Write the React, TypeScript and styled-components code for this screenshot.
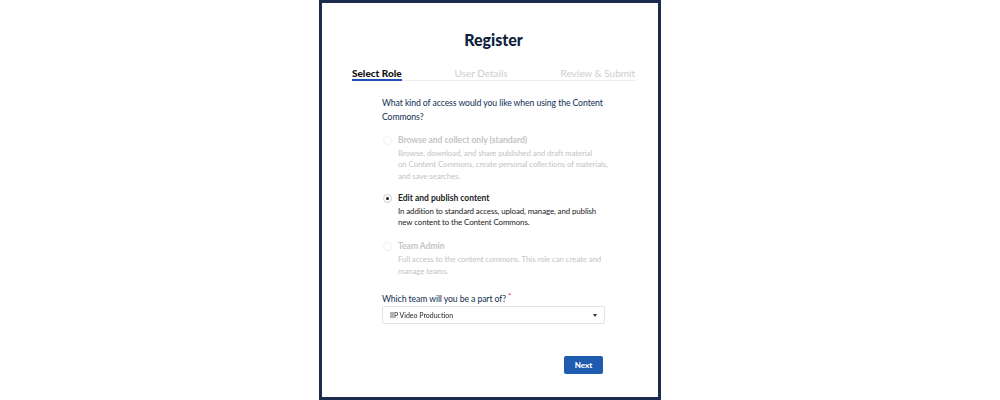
import React from "react";
import styled, { createGlobalStyle } from "styled-components";

const Global = createGlobalStyle`
  html, body { margin: 0; padding: 0; background: #ffffff; }
  body { font-family: Lato, "Noto Sans", sans-serif; }
`;

const Page = styled.div`
  width: 1000px;
  height: 400px;
  padding-left: 319px;
  box-sizing: border-box;
`;

const Frame = styled.div`
  width: 342px;
  height: 400px;
  box-sizing: border-box;
  border: 3px solid #1b2c4e;
  background: #fff;
  padding: 27px 23px 0 30px;
`;

const Title = styled.h1`
  margin: 0;
  font-size: 16px;
  line-height: 20px;
  font-weight: 900;
  color: #0f1f3d;
  text-align: center;
`;

const Tabs = styled.div`
  margin-top: 17px;
  display: flex;
  justify-content: space-between;
  border-bottom: 1px solid #ececec;
`;

const Tab = styled.div<{ $active?: boolean }>`
  font-size: 10px;
  line-height: 12px;
  font-weight: ${(p) => (p.$active ? 900 : 400)};
  color: ${(p) => (p.$active ? "#111" : "#cdcdcd")};
  border-bottom: 2px solid ${(p) => (p.$active ? "#1d4fb8" : "transparent")};
  margin-bottom: -1px;
`;

const Form = styled.div`
  padding: 0 30px;
  display: flex;
  flex-direction: column;
`;

const Question = styled.p`
  margin: 15px 0 0;
  font-size: 8.7px;
  letter-spacing: -0.1px;
  line-height: 14px;
  color: #112e51;
`;

const Option = styled.label<{ $disabled?: boolean; $gap: number }>`
  margin-top: ${(p) => p.$gap}px;
  display: grid;
  grid-template-columns: 16px 1fr;
  color: ${(p) => (p.$disabled ? "#c4c4c4" : "#1b1b1b")};
`;

const Radio = styled.span<{ $checked?: boolean; $disabled?: boolean }>`
  width: 7px;
  height: 7px;
  margin: 2px 0 0 1px;
  border-radius: 50%;
  border: 1px solid ${(p) => (p.$disabled ? "#f0f0f0" : "#cfcfcf")};
  background: #fff;
  display: flex;
  align-items: center;
  justify-content: center;
  &::after {
    content: "";
    width: 3px;
    height: 3px;
    border-radius: 50%;
    background: ${(p) => (p.$checked ? "#1b1b1b" : "transparent")};
  }
`;

const OptionLabel = styled.div`
  font-size: 8.5px;
  line-height: 12px;
  font-weight: 700;
`;

const OptionDesc = styled.div`
  grid-column: 2;
  margin-top: 2px;
  font-size: 7.9px;
  letter-spacing: -0.1px;
  line-height: 11.3px;
  white-space: nowrap;
`;

const FieldLabel = styled.div`
  margin-top: 16px;
  font-size: 8.7px;
  letter-spacing: -0.1px;
  line-height: 12px;
  color: #112e51;
`;

const Req = styled.sup`
  color: #e31c3d;
  font-size: 8px;
  margin-left: 2px;
  vertical-align: 3px;
  line-height: 0;
`;

const Select = styled.div`
  margin-top: 1px;
  height: 18px;
  box-sizing: border-box;
  border: 1px solid #e3e3e3;
  border-radius: 2px;
  display: flex;
  align-items: center;
  justify-content: space-between;
  padding: 0 7px 0 7px;
  font-size: 7px;
  color: #222;
`;

const SelectValue = styled.span`
  display: inline-block;
  will-change: transform;
`;

const Caret = styled.span`
  width: 0;
  height: 0;
  border-left: 2.5px solid transparent;
  border-right: 2.5px solid transparent;
  border-top: 3px solid #333;
`;

const Actions = styled.div`
  margin-top: 32px;
  display: flex;
  justify-content: flex-end;
  padding-right: 2px;
`;

const Button = styled.button`
  width: 39px;
  height: 18px;
  border: none;
  border-radius: 2px;
  background: #1f5bae;
  color: #fff;
  font-family: inherit;
  font-size: 8px;
  font-weight: 900;
  padding: 0;
`;

const options = [
  {
    label: "Browse and collect only (standard)",
    desc: [
      "Browse, download, and share published and draft material",
      "on Content Commons, create personal collections of materials,",
      "and save searches.",
    ],
    disabled: true,
    checked: false,
    gap: 10,
  },
  {
    label: "Edit and publish content",
    desc: ["In addition to standard access, upload, manage, and publish", "new content to the Content Commons."],
    disabled: false,
    checked: true,
    gap: 10,
  },
  {
    label: "Team Admin",
    desc: ["Full access to the content commons. This role can create and", "manage teams."],
    disabled: true,
    checked: false,
    gap: 12,
  },
];

export default function App() {
  return (
    <Page>
      <Global />
      <Frame>
        <Title>Register</Title>
        <Tabs>
          <Tab $active>Select Role</Tab>
          <Tab>User Details</Tab>
          <Tab>Review &amp; Submit</Tab>
        </Tabs>
        <Form>
          <Question>What kind of access would you like when using the Content Commons?</Question>
          {options.map((o) => (
            <Option key={o.label} $disabled={o.disabled} $gap={o.gap}>
              <Radio $checked={o.checked} $disabled={o.disabled} />
              <OptionLabel>{o.label}</OptionLabel>
              <OptionDesc>
                {o.desc.map((line, i) => (
                  <React.Fragment key={i}>
                    {i > 0 && <br />}
                    {line}
                  </React.Fragment>
                ))}
              </OptionDesc>
            </Option>
          ))}
          <FieldLabel>
            Which team will you be a part of?<Req>*</Req>
          </FieldLabel>
          <Select>
            <SelectValue>IIP Video Production</SelectValue>
            <Caret />
          </Select>
          <Actions>
            <Button>Next</Button>
          </Actions>
        </Form>
      </Frame>
    </Page>
  );
}
